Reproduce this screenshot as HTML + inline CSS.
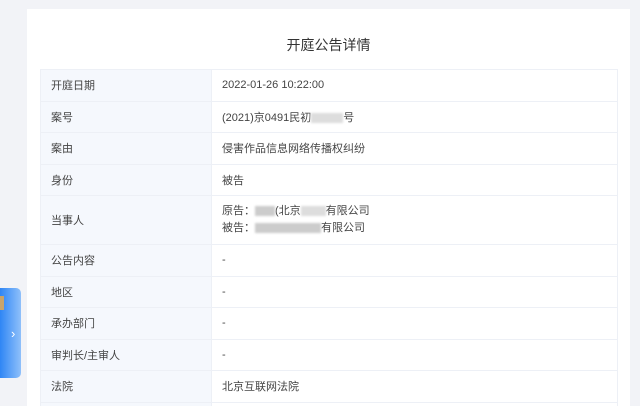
<!DOCTYPE html><html><head><meta charset="utf-8"><style>
html,body{margin:0;width:640px;height:406px;overflow:hidden}
body{background:#f2f3f7;font-family:"Liberation Sans","Noto Sans CJK SC",sans-serif;position:relative}
.card{position:absolute;left:27px;top:9px;width:603px;height:397px;background:#fff;overflow:hidden}
.t{position:absolute;left:0;width:603px;top:26px;text-align:center;font-size:14px;color:#333}
table{position:absolute;left:13px;top:60px;width:578px;border-collapse:collapse;font-size:11px;color:#444}
td{border:1px solid #edf0f6;padding:0 0 0 10px;height:30.5px}
td.l{width:160px;background:#f5f8fd;color:#444}
.b{display:inline-block;height:10px;background:#ccc;vertical-align:middle;filter:blur(1px)}
.w{position:absolute;left:0;top:288px;width:21px;height:90px;border-radius:0 5px 5px 0;background:linear-gradient(90deg,#2f86f5,#8fc0fa)}
</style></head><body>
<div class="card"><div class="t">开庭公告详情</div>
<table>
<tr><td class="l">开庭日期</td><td>2022-01-26 10:22:00</td></tr>
<tr><td class="l">案号</td><td>(2021)京0491民初<span class="b" style="width:32px;background:#ddd"></span>号</td></tr>
<tr><td class="l">案由</td><td>侵害作品信息网络传播权纠纷</td></tr>
<tr><td class="l">身份</td><td>被告</td></tr>
<tr><td class="l" style="height:48px">当事人</td><td style="line-height:17px">原告：<span class="b" style="width:20px"></span>(北京<span class="b" style="width:25px;background:#ddd"></span>有限公司<br>被告：<span class="b" style="width:66px"></span>有限公司</td></tr>
<tr><td class="l">公告内容</td><td>-</td></tr>
<tr><td class="l">地区</td><td>-</td></tr>
<tr><td class="l">承办部门</td><td>-</td></tr>
<tr><td class="l">审判长/主审人</td><td>-</td></tr>
<tr><td class="l">法院</td><td>北京互联网法院</td></tr>
<tr><td class="l" style="height:4px"></td><td style="height:4px"></td></tr>
</table></div>
<div class="w"><div style="position:absolute;left:0;top:8px;width:4px;height:14px;background:#c9a46a"></div><div style="position:absolute;left:11px;top:38px;color:#fff;font-size:13px">›</div></div>
</body></html>
